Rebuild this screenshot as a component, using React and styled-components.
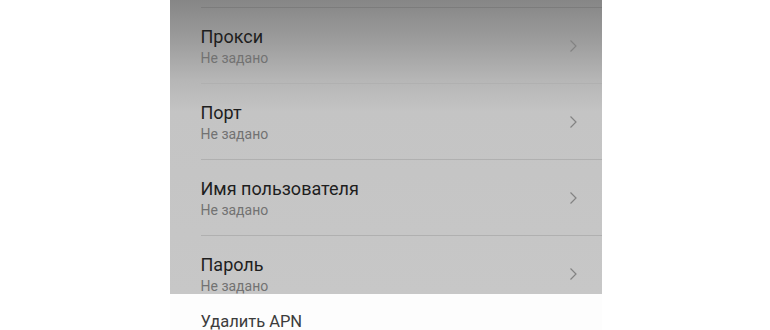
import React from 'react';
import styled, { createGlobalStyle } from 'styled-components';

const GlobalStyle = createGlobalStyle`
  html, body {
    margin: 0;
    padding: 0;
    background: #ffffff;
  }
  body {
    font-family: Roboto, "Noto Sans", "Liberation Sans", sans-serif;
  }
`;

const Page = styled.div`
  width: 770px;
  height: 330px;
  overflow: hidden;
  display: flex;
  justify-content: center;
`;

const Panel = styled.div`
  width: 432px;
  margin-left: 1px;
  display: flex;
  flex-direction: column;
  background: #fdfdfd;
`;

const Dimmed = styled.div`
  height: 294px;
  flex-shrink: 0;
  overflow: hidden;
  padding-top: 7px;
  box-sizing: border-box;
  background: linear-gradient(
    to bottom,
    #868686 0px,
    #9c9c9c 40px,
    #b6b6b6 80px,
    #c4c4c4 112px,
    #c7c7c7 100%
  );
`;

const Row = styled.div`
  height: 76px;
  margin-left: 31px;
  padding-right: 24px;
  display: flex;
  align-items: center;
  justify-content: space-between;
  border-top: 1px solid ${p => (p.$first ? '#7c7c7c' : '#b0b0b0')};
  box-sizing: border-box;
`;

const Texts = styled.div`
  display: flex;
  flex-direction: column;
  gap: 3px;
  margin-top: 1px;
`;

const Title = styled.div`
  font-size: 18px;
  color: #1e1e1e;
  line-height: 21px;
`;

const Sub = styled.div`
  font-size: 14px;
  color: #727272;
  line-height: 17px;
`;

const Chevron = () => (
  <svg width="10" height="16" viewBox="0 0 10 16">
    <path d="M2.5 2.5 L8 8 L2.5 13.5" fill="none" stroke="#838383" strokeWidth="1.2" />
  </svg>
);

const Action = styled.div`
  margin-left: 31px;
  padding-top: 18px;
  font-size: 16.5px;
  line-height: 20px;
  color: #3c3c3c;
`;

const items = ['Прокси', 'Порт', 'Имя пользователя', 'Пароль'];

export default function App() {
  return (
    <Page>
      <GlobalStyle />
      <Panel>
        <Dimmed>
          {items.map((t, i) => (
            <Row key={t} $first={i === 0}>
              <Texts>
                <Title>{t}</Title>
                <Sub>Не задано</Sub>
              </Texts>
              <Chevron />
            </Row>
          ))}
        </Dimmed>
        <Action>Удалить APN</Action>
      </Panel>
    </Page>
  );
}
